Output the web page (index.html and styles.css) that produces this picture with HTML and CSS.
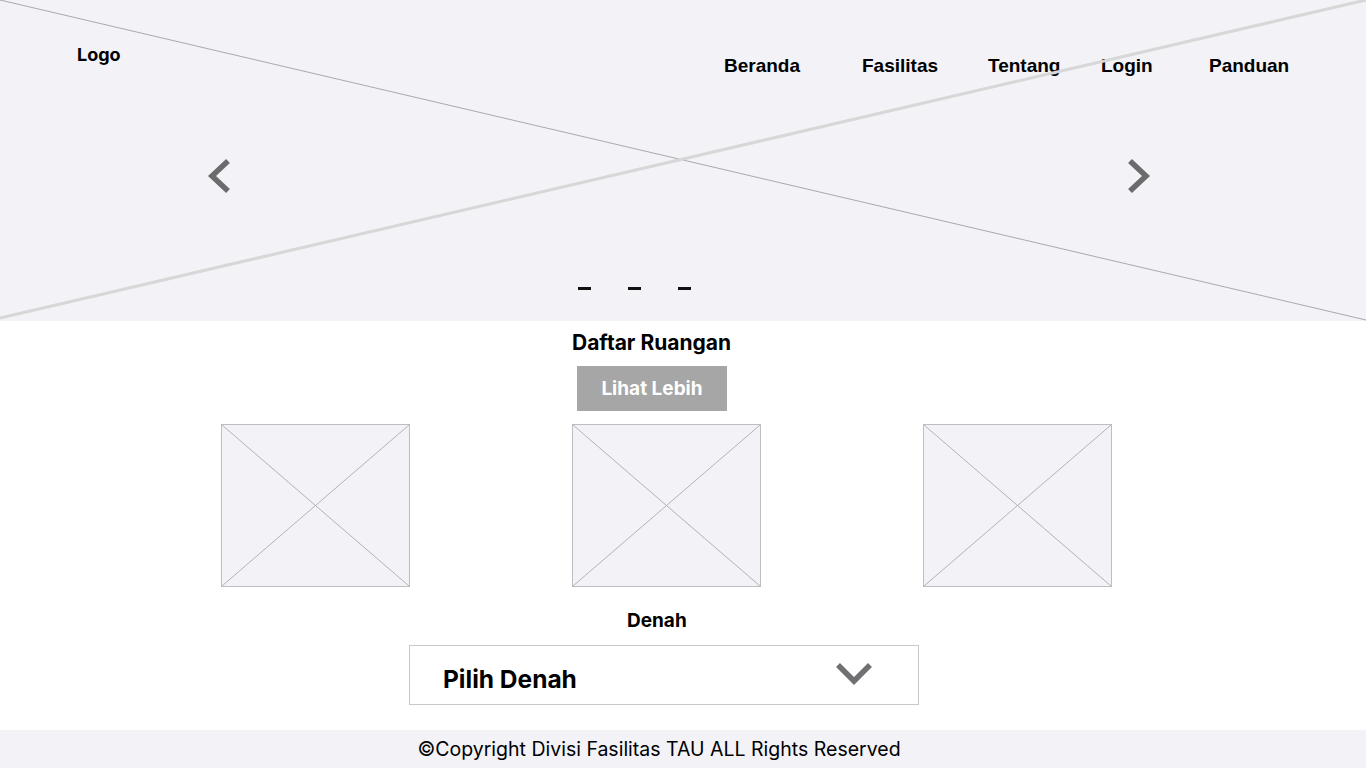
FILE: index.html
```html
<!DOCTYPE html>
<html lang="id">
<head>
<meta charset="utf-8">
<title>Fasilitas TAU</title>
<link rel="stylesheet" href="styles.css">
</head>
<body>
<section class="hero">
  <header class="header">
    <div class="logo">Logo</div>
    <a class="nav-item" href="#">Beranda</a>
    <a class="nav-item" href="#">Fasilitas</a>
    <a class="nav-item" href="#">Tentang</a>
    <a class="nav-item" href="#">Login</a>
    <a class="nav-item" href="#">Panduan</a>
  </header>
  <div class="carousel">
    <svg class="arrow" width="26" height="36" viewBox="0 0 26 36"><polyline points="21,3 5,18 21,33" fill="none" stroke="#6b6b6d" stroke-width="5.5"/></svg>
    <svg class="arrow" width="26" height="36" viewBox="0 0 26 36"><polyline points="4,3 20,18 4,33" fill="none" stroke="#6b6b6d" stroke-width="5.5"/></svg>
  </div>
  <div class="dots">
    <span class="dot"></span><span class="dot"></span><span class="dot"></span>
  </div>
  <svg class="hero-lines" viewBox="0 0 1366 321" preserveAspectRatio="none">
    <line x1="0" y1="0" x2="1366" y2="320" stroke="#a9a9b1" stroke-width="1"/>
    <line x1="0" y1="318" x2="1366" y2="0" stroke="#d7d7d7" stroke-width="3"/>
  </svg>
</section>

<main class="content">
  <h2 class="title">Daftar Ruangan</h2>
  <button class="btn">Lihat Lebih</button>
  <div class="cards">
    <div class="card">
      <svg class="ph" viewBox="0 0 100 100" preserveAspectRatio="none"><line x1="0" y1="0" x2="100" y2="100" vector-effect="non-scaling-stroke"/><line x1="100" y1="0" x2="0" y2="100" vector-effect="non-scaling-stroke"/></svg>
    </div>
    <div class="card">
      <svg class="ph" viewBox="0 0 100 100" preserveAspectRatio="none"><line x1="0" y1="0" x2="100" y2="100" vector-effect="non-scaling-stroke"/><line x1="100" y1="0" x2="0" y2="100" vector-effect="non-scaling-stroke"/></svg>
    </div>
    <div class="card">
      <svg class="ph" viewBox="0 0 100 100" preserveAspectRatio="none"><line x1="0" y1="0" x2="100" y2="100" vector-effect="non-scaling-stroke"/><line x1="100" y1="0" x2="0" y2="100" vector-effect="non-scaling-stroke"/></svg>
    </div>
  </div>
  <div class="denah-label">Denah</div>
  <div class="select">
    <span class="select-text">Pilih Denah</span>
    <svg class="chev" width="38" height="24" viewBox="0 0 38 24"><polyline points="3,3 19,19 35,3" fill="none" stroke="#707072" stroke-width="5.5"/></svg>
  </div>
</main>

<footer class="footer">©Copyright Divisi Fasilitas TAU ALL Rights Reserved</footer>
</body>
</html>
```

FILE: styles.css
```css
* { box-sizing: border-box; }
html, body { margin: 0; padding: 0; }
body {
  width: 1366px;
  height: 768px;
  overflow: hidden;
  background: #ffffff;
  color: #000;
  font-family: Inter, "Liberation Sans", sans-serif;
}

.hero {
  position: relative;
  height: 321px;
  background: #f2f2f7;
  overflow: hidden;
}
.hero-lines {
  position: absolute;
  left: 0;
  top: 0;
  width: 1366px;
  height: 321px;
  pointer-events: none;
}

.header {
  display: grid;
  grid-template-columns: 647px 138px 126px 113px 108px auto;
  align-items: start;
  padding: 44px 0 0 77px;
}
.logo {
  font-size: 18px;
  line-height: 22px;
  font-weight: 700;
}
.nav-item {
  margin-top: 11px;
  font-family: "Liberation Sans", Arial, sans-serif;
  font-size: 19px;
  line-height: 22px;
  font-weight: 700;
  color: #000;
  text-decoration: none;
}

.carousel {
  display: flex;
  justify-content: space-between;
  margin-top: 81px;
  padding: 0 214px 0 207px;
}
.arrow { display: block; }

.dots {
  display: flex;
  gap: 37px;
  margin-top: 93px;
  padding-left: 578px;
}
.dot {
  display: block;
  width: 13px;
  height: 3px;
  background: #111;
}

.content {
  display: flex;
  flex-direction: column;
  align-items: flex-start;
  padding-top: 10px;
}
.title {
  margin: 0;
  align-self: flex-start;
  margin-left: 572px;
  font-size: 21px;
  line-height: 24px;
  font-weight: 700;
}
.btn {
  margin: 11px 0 0 577px;
  width: 150px;
  height: 45px;
  border: 0;
  background: #a6a6a6;
  color: #fff;
  font-family: Inter, "Liberation Sans", sans-serif;
  font-size: 19px;
  font-weight: 700;
  padding: 0;
}

.cards {
  display: flex;
  gap: 162px;
  margin-top: 13px;
  padding-left: 221px;
}
.card {
  width: 189px;
  height: 163px;
  background: #f2f2f7;
  border: 1px solid #bdbdc2;
}
.ph {
  display: block;
  width: 100%;
  height: 100%;
}
.ph line {
  stroke: #b2b2b8;
  stroke-width: 1;
}

.denah-label {
  margin: 23px 0 0 627px;
  font-size: 19px;
  line-height: 22px;
  font-weight: 700;
}

.select {
  display: flex;
  align-items: center;
  justify-content: space-between;
  margin: 13px 0 0 409px;
  width: 510px;
  height: 60px;
  border: 1px solid #c8c8cc;
  background: #fff;
  padding: 0 45px 0 33px;
}
.select-text {
  font-size: 24.5px;
  font-weight: 700;
  line-height: 30px;
  margin-top: 8px;
}
.chev { display: block; margin-top: -3px; }

.footer {
  margin-top: 25px;
  height: 38px;
  background: #f2f2f7;
  text-align: center;
  font-size: 19.5px;
  line-height: 38px;
  padding-right: 48px;
}
```
